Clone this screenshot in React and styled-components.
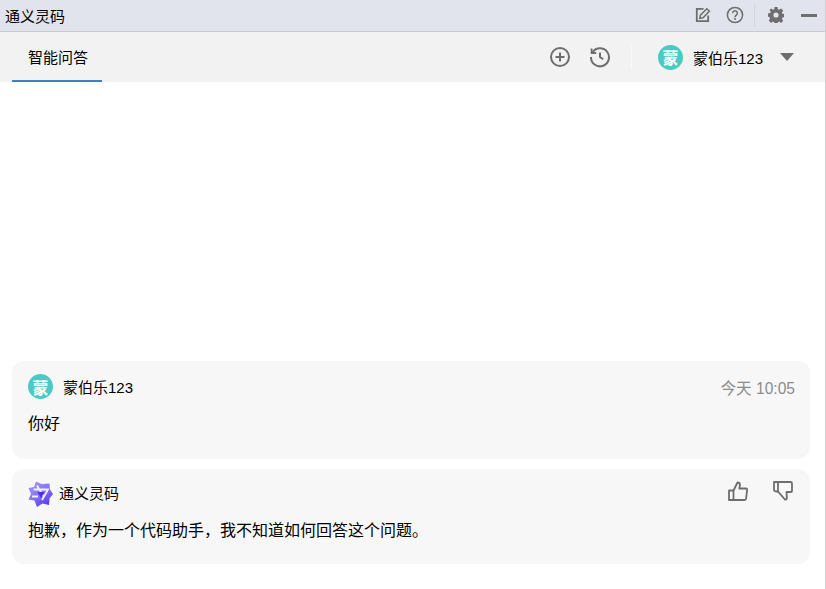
import React from 'react'
import styled, { createGlobalStyle } from 'styled-components'

const GlobalStyle = createGlobalStyle`
  html, body { margin: 0; padding: 0; background: #fff; }
  body { font-family: "Liberation Sans", "Noto Sans CJK SC", sans-serif; color: #000; }
`

const AVATAR_NAME = '蒙伯乐123'

const PlusIcon = () => (
  <svg width="22" height="22" viewBox="0 0 22 22" fill="none" stroke="#6e6e6e" strokeWidth="2">
    <circle cx="11" cy="11" r="9" />
    <path d="M11 6.500v9M6.500 11h9" />
  </svg>
)

const HistoryIcon = () => (
  <svg width="22" height="22" viewBox="0 0 22 22" fill="none" stroke="#6e6e6e" strokeWidth="2">
    <path d="M3.600 6.200A9 9 0 1 1 2 11" />
    <path d="M2.600 2.400v4.600h4.600" strokeWidth="1.800" />
    <path d="M11 6.500V11l3.200 2.200" />
  </svg>
)

const EditIcon = () => (
  <svg width="16" height="16" viewBox="0 0 16 16" fill="none" stroke="#6e6e6e" strokeWidth="1.800">
    <path d="M13.200 8.500v5.700H1.800V1.800h6.700" />
    <path d="M4.800 11.300l.6-3.200 6.400-6.400 2.600 2.600-6.400 6.400z" strokeWidth="1.500" />
  </svg>
)

const HelpIcon = () => (
  <svg width="18" height="18" viewBox="0 0 18 18" fill="none" stroke="#6e6e6e" strokeWidth="1.500">
    <circle cx="9" cy="9" r="7.600" />
    <path d="M6.600 7.200a2.400 2.400 0 1 1 3.700 2c-.9.600-1.300 1-1.300 2" />
    <circle cx="9" cy="13.100" r="1" fill="#6e6e6e" stroke="none" />
  </svg>
)

const GearIcon = () => (
  <svg width="16" height="16" viewBox="0 0 16 16">
    <path
      fill="#6e6e6e"
      fillRule="evenodd"
      d="M6.500 0h3l.4 2.200 1.300.6L13.100 1.500l2.100 2.100-1.300 1.900.6 1.300 2.200.4v3l-2.200.4-.6 1.300 1.300 1.900-2.100 2.100-1.900-1.300-1.300.6-.4 2.200h-3l-.4-2.200-1.300-.6-1.900 1.300L.8 13.500l1.300-1.900-.6-1.300L0 9.500v-3l2.200-.4.600-1.300L1.500 3.100 3.100 1.500l1.900 1.300 1.300-.6zM8 5.400a2.600 2.600 0 1 0 0 5.200 2.600 2.600 0 0 0 0-5.200z"
    />
  </svg>
)

const ThumbUpIcon = () => (
  <svg width="20" height="20" viewBox="0 0 20 20" fill="none" stroke="#6e6e6e" strokeWidth="1.800" strokeLinejoin="round">
    <path d="M1 9.500h4.500V19H1z" />
    <path d="M5.500 9.500 9.500 1.500c1.500 0 2.500 1 2.500 2.500L11.300 7.500H18c.8 0 1.200.6 1.100 1.400l-1 8.600c-.1.900-.7 1.500-1.600 1.500H5.500" />
  </svg>
)

const ThumbDownIcon = () => (
  <svg width="20" height="20" viewBox="0 0 20 20" fill="none" stroke="#6e6e6e" strokeWidth="1.800" strokeLinejoin="round">
    <path d="M1 1h4v9.500H3c-1.200 0-2-.8-2-2z" />
    <path d="M5 1h12.500c.9 0 1.500.6 1.500 1.500V10c0 .6-.5 1-1 1h-4.500l.4 6c0 1-.8 1.800-1.800 1.600L5 10.500" />
  </svg>
)

const LingmaLogo = () => (
  <svg width="25" height="26" viewBox="0 0 25 26">
    <defs>
      <linearGradient id="lingma" x1="0.1" y1="0" x2="0.7" y2="1">
        <stop offset="0" stopColor="#a49bfa" />
        <stop offset="0.55" stopColor="#8270f6" />
        <stop offset="1" stopColor="#5a35ea" />
      </linearGradient>
    </defs>
    <path
      fill="url(#lingma)"
      d="M8 .5l5.500 2.500 8-.5.500 6 3 4.500-3.500 4.500-.5 6.500-6.500-1.500-5.500 3.500-2.500-6.500-6-1 2.500-5.500L.5 7l5.500-1z"
    />
    <path fill="none" stroke="#f4f2ff" strokeWidth="1.800" d="M5.500 8.500h14.500l-6 10.500M9 4.500l6.500 11M4 15.500h6" />
    <path fill="#4f2be0" d="M9.500 11h7l-3.400 6z" />
  </svg>
)

export default function App() {
  return (
    <>
      <GlobalStyle />
      <Page>
        <TitleBar>
          <Title>通义灵码</Title>
          <TitleTools>
            <TitleTool><EditIcon /></TitleTool>
            <TitleTool><HelpIcon /></TitleTool>
            <ToolDivider />
            <TitleTool><GearIcon /></TitleTool>
            <MinimizeBar />
          </TitleTools>
        </TitleBar>
        <TabBar>
          <Tab>智能问答</Tab>
          <TabActions>
            <ActionIcon><PlusIcon /></ActionIcon>
            <ActionIcon><HistoryIcon /></ActionIcon>
            <ActionDivider />
            <Avatar $size={25}>蒙</Avatar>
            <AccountName>{AVATAR_NAME}</AccountName>
            <Caret />
          </TabActions>
        </TabBar>
        <Messages>
          <UserCard>
            <CardHead>
              <Avatar $size={25}>蒙</Avatar>
              <UserName>{AVATAR_NAME}</UserName>
              <Time>今天 10:05</Time>
            </CardHead>
            <Body $top={14}>你好</Body>
          </UserCard>
          <BotCard>
            <BotHead>
              <LingmaLogo />
              <BotName>通义灵码</BotName>
              <Feedback>
                <ThumbUpIcon />
                <ThumbDownIcon />
              </Feedback>
            </BotHead>
            <Body $top={13}>抱歉，作为一个代码助手，我不知道如何回答这个问题。</Body>
          </BotCard>
        </Messages>
      </Page>
    </>
  )
}

const Page = styled.div`
  width: 826px;
  height: 589px;
  display: flex;
  flex-direction: column;
  overflow: hidden;
  box-sizing: border-box;
  border-right: 1px solid #d0d0d0;
`

const TitleBar = styled.div`
  height: 32px;
  flex: none;
  box-sizing: border-box;
  display: flex;
  align-items: center;
  justify-content: space-between;
  padding: 0 8px 1px 5px;
  background: #e1e4ed;
  border-bottom: 1px solid #c6c9ce;
`

const Title = styled.span`
  font-size: 15px;
`

const TitleTools = styled.div`
  display: flex;
  align-items: center;
`

const TitleTool = styled.span`
  display: flex;
  align-items: center;
  justify-content: center;
  width: 18px;
  margin-left: 14px;
`

const ToolDivider = styled.span`
  width: 1px;
  height: 24px;
  margin-left: 10px;
  margin-right: -2px;
  background: #d3d6dd;
`

const MinimizeBar = styled.span`
  width: 16px;
  height: 3px;
  margin-left: 16px;
  background: #6e6e6e;
`

const TabBar = styled.div`
  height: 50px;
  flex: none;
  box-sizing: border-box;
  display: flex;
  align-items: stretch;
  justify-content: space-between;
  padding: 0 31px 0 12px;
  background: #f2f2f2;
`

const Tab = styled.div`
  width: 90px;
  box-sizing: border-box;
  display: flex;
  align-items: center;
  justify-content: center;
  font-size: 15px;
  padding: 1px 0 0 2px;
  border-bottom: 2px solid #3d80c8;
`

const TabActions = styled.div`
  display: flex;
  align-items: center;
`

const ActionIcon = styled.span`
  display: flex;
  margin-right: 18px;
`

const ActionDivider = styled.span`
  width: 1px;
  height: 22px;
  margin: 0 26px 0 2px;
  background: #fafafa;
`

const Avatar = styled.span`
  width: ${p => p.$size}px;
  height: ${p => p.$size}px;
  flex: none;
  border-radius: 50%;
  background: #47cbc4;
  color: #fff;
  font-size: 16px;
  font-weight: 700;
  display: flex;
  align-items: center;
  justify-content: center;
`

const AccountName = styled.span`
  font-size: 15px;
  margin-left: 10px;
`

const Caret = styled.span`
  width: 0;
  height: 0;
  margin-left: 17px;
  border-left: 7px solid transparent;
  border-right: 7px solid transparent;
  border-top: 8px solid #6e6e6e;
`

const Messages = styled.main`
  flex: 1;
  display: flex;
  flex-direction: column;
  justify-content: flex-end;
  gap: 10px;
  padding: 0 15px 25px 12px;
`

const Card = styled.section`
  box-sizing: border-box;
  background: #f7f7f7;
  border-radius: 12px;
  padding: 0 15px 0 16px;
`

const UserCard = styled(Card)`
  height: 98px;
  padding-top: 13px;
`

const BotCard = styled(Card)`
  height: 95px;
  padding-top: 12px;
`

const CardHead = styled.div`
  display: flex;
  align-items: center;
  height: 25px;
`

const BotHead = styled(CardHead)`
  height: 26px;
`

const UserName = styled.span`
  font-size: 15px;
  margin-left: 10px;
`

const Time = styled.span`
  margin-left: auto;
  font-size: 15.600px;
  color: #8c8c8c;
`

const BotName = styled.span`
  font-size: 15px;
  margin-left: 6px;
  padding-bottom: 3px;
`

const Feedback = styled.div`
  display: flex;
  gap: 25px;
  margin: -6px 2px 0 auto;
`

const Body = styled.p`
  margin: ${p => p.$top}px 0 0;
  font-size: 16px;
  line-height: 22px;
`
